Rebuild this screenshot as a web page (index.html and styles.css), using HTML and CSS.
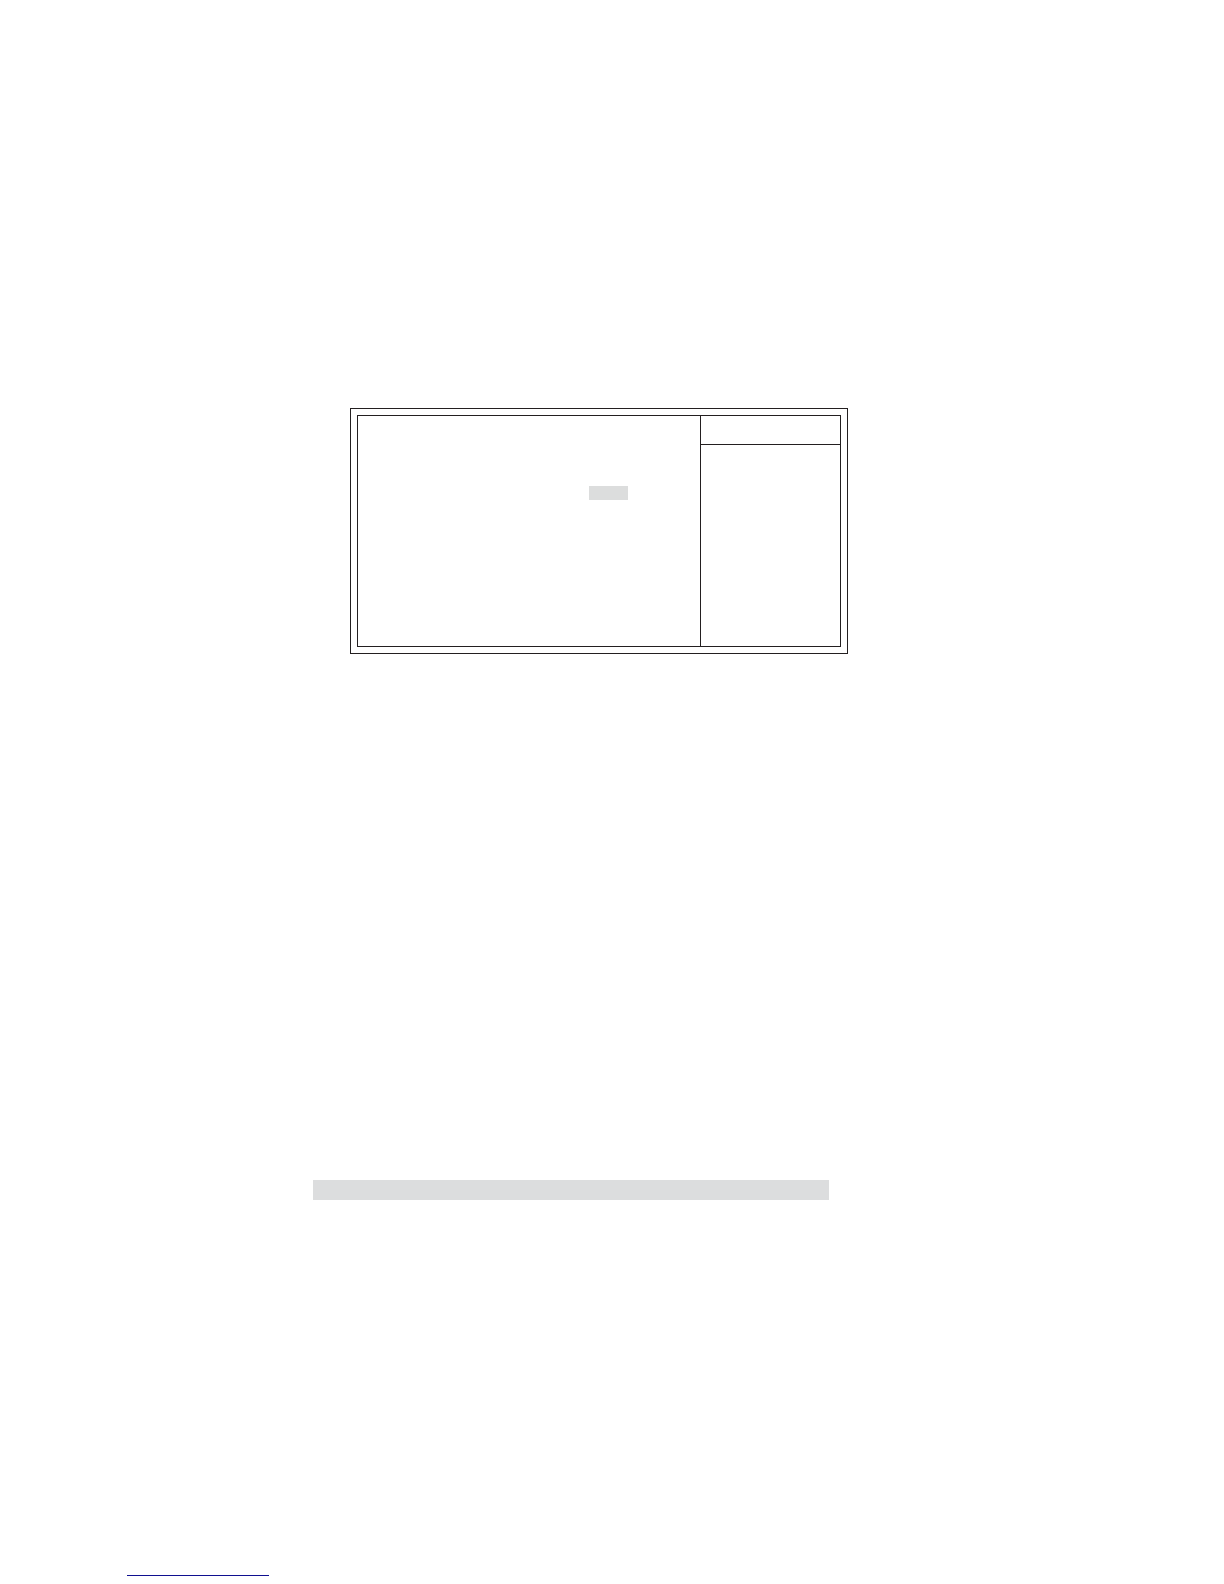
FILE: index.html
```html
<!DOCTYPE html>
<html lang="en">
<head>
<meta charset="utf-8">
<meta name="viewport" content="width=device-width, initial-scale=1">
<title>Setup</title>
<link rel="stylesheet" href="styles.css">
</head>
<body>
<main class="page">
  <section class="window">
    <div class="panes">
      <div class="settings"><div class="selection"></div></div>
      <aside class="help">
        <div class="help-head"></div>
        <div class="help-body"></div>
      </aside>
    </div>
  </section>
  <div class="band"></div>
  <hr class="rule">
</main>
</body>
</html>
```
FILE: styles.css
```css
* {
  box-sizing: border-box;
}

body {
  margin: 0;
  background: #fff;
  font-family: "Liberation Sans", sans-serif;
}

.page {
  display: flex;
  flex-direction: column;
  padding: 408px 0 8px;
}

.window {
  margin: 0 376px 0 350px;
  padding: 6px;
  border: 1px solid #231f20;
}

.panes {
  display: grid;
  grid-template-columns: 1fr 140px;
  border: 1px solid #231f20;
}

.settings {
  padding: 70px 72px 146px;
}

.selection {
  width: 39px;
  height: 14px;
  margin-left: auto;
  background: #dcdddd;
}

.help {
  display: flex;
  flex-direction: column;
  border-left: 1px solid #231f20;
}

.help-head {
  height: 29px;
  border-bottom: 1px solid #231f20;
}

.help-body {
  flex: 1;
}

.band {
  height: 20px;
  margin: 526px 395px 0 313px;
  background: #dcddde;
}

.rule {
  width: 142px;
  height: 1px;
  margin: 375px 0 0 127px;
  border: 0;
  background: #101090;
}
```
